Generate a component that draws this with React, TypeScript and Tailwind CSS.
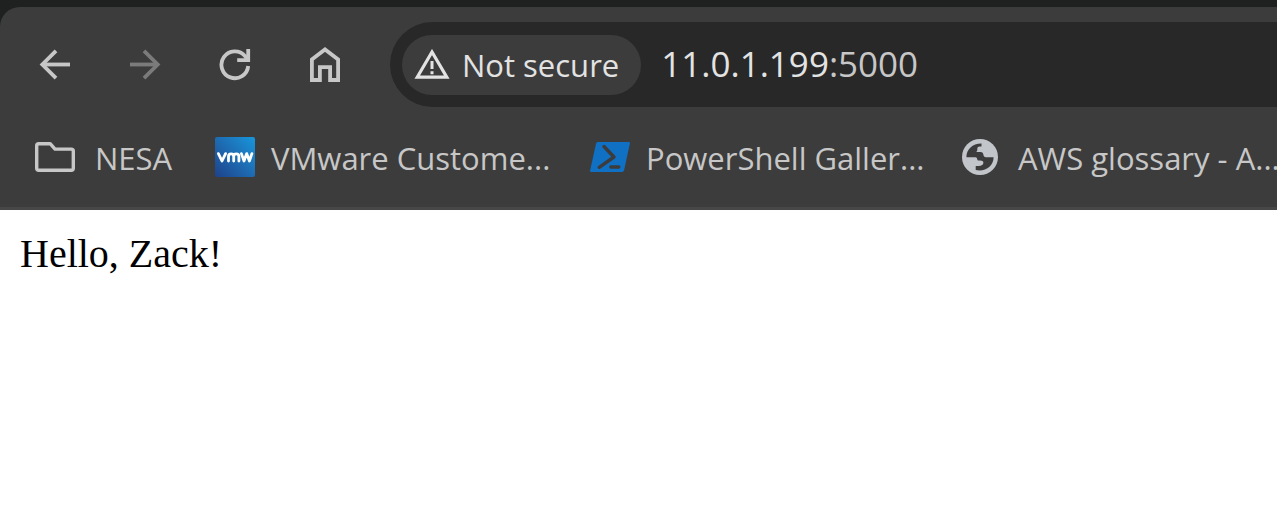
import type { ReactNode } from "react";

function BackArrow() {
  return (
    <svg viewBox="0 0 32 32" className="size-8" fill="none" stroke="currentColor" strokeWidth="3.8" aria-hidden="true">
      <path d="M31 15.5H4" />
      <path d="M17 1.8 3.3 15.5 17 29.2" />
    </svg>
  );
}

function ForwardArrow() {
  return (
    <svg viewBox="0 0 32 32" className="size-8" fill="none" stroke="currentColor" strokeWidth="3.8" aria-hidden="true">
      <path d="M1 15.5h27" />
      <path d="M15 1.8 28.7 15.5 15 29.2" />
    </svg>
  );
}

function Reload() {
  return (
    <svg viewBox="0 0 32 32" className="size-8" fill="none" stroke="currentColor" strokeWidth="3.8" aria-hidden="true">
      <path d="M29.2 17A13.4 13.4 0 1 1 26 7L29 11" />
      <path d="M29.2 0v11.200H18.200" />
    </svg>
  );
}

function Home() {
  return (
    <svg viewBox="0 0 32 36" className="h-9 w-8" fill="none" stroke="currentColor" strokeWidth="3.8" aria-hidden="true">
      <path d="M2.900 33V12.400L16 2.500l13.100 9.900V33h-8V20.200H10.900V33z" />
    </svg>
  );
}

function Warning() {
  return (
    <svg viewBox="0 0 36 32" className="h-8 w-9 shrink-0" fill="none" stroke="currentColor" aria-hidden="true">
      <path d="M3.200 28.200 18 3l14.800 25.200z" strokeWidth="3.2" />
      <path d="M18 12v8M18 22.300v3" strokeWidth="3" />
    </svg>
  );
}

function Folder() {
  return (
    <svg viewBox="0 0 40 40" className="size-10 shrink-0" fill="none" stroke="#c7c7c7" strokeWidth="3.4" strokeLinejoin="round" aria-hidden="true">
      <path d="M3.7 6.7h11.5l4.8 5.4h16.3q2 0 2 2v17.2q0 2-2 2H3.7q-2 0-2-2V8.7q0-2 2-2z" />
    </svg>
  );
}

function Vmware() {
  return (
    <span className="flex size-10 shrink-0 items-center justify-center rounded-xs bg-linear-to-tr from-[#1d428a] to-[#1697dc]">
      <svg viewBox="0 0 40 40" className="size-10" fill="none" stroke="#ffffff" strokeWidth="2.800" strokeLinecap="round" strokeLinejoin="round" aria-hidden="true">
        <path d="M3.400 16.600 7 24l3.600-7.400" />
        <path d="M13.500 24v-4.400q0-2.800 2.600-2.800t2.600 2.800V24M18.700 19.600q0-2.800 2.600-2.800t2.600 2.800V24" />
        <path d="m26.400 16.600 2.600 7.400 2.700-7.400 2.700 7.400 2.500-7.400" />
      </svg>
    </span>
  );
}

function PowerShell() {
  return (
    <svg viewBox="0 0 40 40" className="size-10 shrink-0" fill="none" aria-hidden="true">
      <path d="M7.800 5h31q1.400 0 1.100 1.400l-5.800 26.900q-.4 1.700-2 1.700H1.200q-1.400 0-1.100-1.400L6 6.700Q6.400 5 7.800 5z" fill="#1070c4" />
      <path d="m14 9.500 10 10.500L9.200 30.300M20.800 30h8" stroke="#3c3c3c" strokeWidth="3.400" strokeLinecap="round" strokeLinejoin="round" />
    </svg>
  );
}

function Globe() {
  return (
    <svg viewBox="0 0 36 36" className="size-9 shrink-0" aria-hidden="true">
      <circle cx="18" cy="18" r="18" fill="#c2c5ca" />
      <path
        d="M4.400 18.200C4.400 10.300 10.500 4.400 19.500 4.500V7.400H17.500Q15.300 7.400 15.300 9.600V11Q15.300 12.900 13.700 12.900H19Q21.200 13.200 21.400 15.500Q21.600 18.200 24 18.200H31.600C31.600 27 23.500 33 13.700 31V27H16.500Q21.400 26.800 21.400 23.800Q21.200 21.600 18.200 21.600H16.300Q15.300 21.600 15.200 20Q15.100 18.200 13.500 18.200z"
        fill="#3c3c3c"
      />
    </svg>
  );
}

function NavButton({ label, disabled, children }: { label: string; disabled?: boolean; children: ReactNode }) {
  return (
    <button type="button" aria-label={label} disabled={disabled} className="flex size-8 items-center justify-center text-[#c7c7c7] disabled:text-[#7b7b7b]">
      {children}
    </button>
  );
}

function Bookmark({ icon, label, className }: { icon: ReactNode; label: string; className: string }) {
  return (
    <a href="#" className={`flex shrink-0 items-center whitespace-nowrap ${className}`}>
      {icon}
      <span className="pt-0.5">{label}</span>
    </a>
  );
}

export default function App() {
  return (
    <div className="min-h-screen overflow-hidden bg-white">
      <header className="bg-[#1f2120] pt-[7px] font-['Open_Sans',sans-serif]">
        <div className="rounded-tl-[20px] border-b-[3px] border-[#474747] bg-[#3c3c3c]">
          <div className="flex items-center pt-[15px] pl-[39px]">
            <nav aria-label="Navigation" className="flex shrink-0 items-center gap-[58px]">
              <NavButton label="Back"><BackArrow /></NavButton>
              <NavButton label="Forward" disabled><ForwardArrow /></NavButton>
              <NavButton label="Reload"><Reload /></NavButton>
              <NavButton label="Home"><Home /></NavButton>
            </nav>
            <div className="ml-[49px] flex h-[85px] flex-1 items-center rounded-l-full bg-[#282828] pl-3">
              <button type="button" className="flex h-[60px] shrink-0 items-center gap-3 rounded-full bg-[#3c3c3c] pr-[22px] pl-3 text-[31px] text-[#e3e3e3]">
                <Warning />
                <span className="pt-0.5">Not secure</span>
              </button>
              <label className="ml-5 flex items-center text-[35px] text-[#c7c7c7]">
                <input type="text" aria-label="Address" defaultValue="11.0.1.199" className="field-sizing-content bg-transparent text-[#e3e3e3] outline-none" />
                <span>:5000</span>
              </label>
            </div>
          </div>
          <nav aria-label="Bookmarks" className="flex h-[100px] items-center overflow-hidden pl-[35px] text-[31px] text-[#c7c7c7]">
            <Bookmark icon={<Folder />} label="NESA" className="w-[180px] gap-5" />
            <Bookmark icon={<Vmware />} label="VMware Custome..." className="w-[375px] gap-4" />
            <Bookmark icon={<PowerShell />} label="PowerShell Galler..." className="w-[372px] gap-4" />
            <Bookmark icon={<Globe />} label="AWS glossary - A..." className="gap-5" />
          </nav>
        </div>
      </header>
      <main className="px-5 pt-[21px] font-['Liberation_Serif',serif] text-[40px] leading-[46px] text-black">Hello, Zack!</main>
    </div>
  );
}
